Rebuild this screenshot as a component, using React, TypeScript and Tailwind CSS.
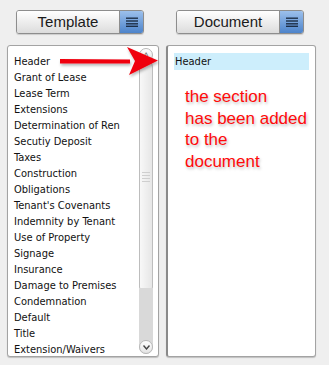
import React from 'react';

const sections = [
  'Header',
  'Grant of Lease',
  'Lease Term',
  'Extensions',
  'Determination of Ren',
  'Secutiy Deposit',
  'Taxes',
  'Construction',
  'Obligations',
  "Tenant's Covenants",
  'Indemnity by Tenant',
  'Use of Property',
  'Signage',
  'Insurance',
  'Damage to Premises',
  'Condemnation',
  'Default',
  'Title',
  'Extension/Waivers',
];

const listFont = { fontFamily: '"DejaVu Sans Condensed", "DejaVu Sans", sans-serif' };

const MenuIcon: React.FC = () => (
  <svg width="12" height="10" viewBox="0 0 12 10">
    <rect x="0" y="0.5" width="12" height="1.4" fill="#1d2f48" />
    <rect x="0" y="3.3" width="12" height="1.4" fill="#1d2f48" />
    <rect x="0" y="6.1" width="12" height="1.4" fill="#1d2f48" />
    <rect x="0" y="8.6" width="12" height="1.4" fill="#1d2f48" />
  </svg>
);

const SplitButton: React.FC<{ label: string }> = ({ label }) => (
  <div className="flex h-[24px] w-[128px] overflow-hidden rounded-[3px] border border-[#8d8d8d] shadow-[0_1px_1px_rgba(0,0,0,0.15)]">
    <div className="flex flex-1 items-center justify-center bg-gradient-to-b from-[#ffffff] to-[#dcdcdc] text-[15px] text-[#1a1a1a]">
      {label}
    </div>
    <div className="flex w-[24px] items-center justify-center border-l border-[#8d8d8d] bg-gradient-to-b from-[#9cc0ec] to-[#4d84cb]">
      <MenuIcon />
    </div>
  </div>
);

const Scrollbar: React.FC = () => (
  <div className="flex w-[16px] flex-col items-center py-[1px]">
    <div className="flex h-[14px] w-[14px] items-center justify-center rounded-full border border-[#b8b8b8] bg-gradient-to-b from-white to-[#e4e4e4] text-[8px] leading-none text-[#555]">
      ˄
    </div>
    <div className="mt-[-2px] flex h-[234px] w-[14px] flex-col items-center justify-center gap-[2px] rounded-[7px] border border-[#bdbdbd] bg-gradient-to-r from-[#f8f8f8] to-[#e6e6e6]">
      <div className="h-[1px] w-[8px] bg-[#cfcfcf]" />
      <div className="h-[1px] w-[8px] bg-[#cfcfcf]" />
      <div className="h-[1px] w-[8px] bg-[#cfcfcf]" />
      <div className="h-[1px] w-[8px] bg-[#cfcfcf]" />
    </div>
    <div className="mt-[-6px] flex-1 w-[14px] rounded-b-[7px] bg-[#d9d9d9]" />
    <div className="mt-[-14px] flex h-[14px] w-[14px] items-center justify-center rounded-full border border-[#b8b8b8] bg-gradient-to-b from-white to-[#e4e4e4]">
      <svg width="7" height="5" viewBox="0 0 7 5">
        <path d="M0.5 0.5 L3.5 4 L6.5 0.5" fill="none" stroke="#444" strokeWidth="1.4" />
      </svg>
    </div>
  </div>
);

const App: React.FC = () => {
  return (
    <div
      className="relative flex h-[365px] w-[329px] bg-[#efefef] pt-[10px]"
      style={{ fontFamily: '"Liberation Sans", Arial, sans-serif' }}
    >
      {/* template column */}
      <div className="ml-[7px] flex w-[152px] flex-col">
        <div className="ml-[9px]">
          <SplitButton label="Template" />
        </div>
        <div className="mt-[11px] flex h-[312px] rounded-[3px] border border-[#a3a3a3] bg-white shadow-[0_1px_1px_rgba(0,0,0,0.2)]">
          <div className="flex flex-1 flex-col pl-[6px] pt-[8px]" style={listFont}>
            {sections.map((s) => (
              <div key={s} className="h-[16px] whitespace-nowrap text-[11px] leading-[16px] text-[#111]">
                {s}
              </div>
            ))}
          </div>
          <div className="mr-[4px] flex py-[1px]">
            <Scrollbar />
          </div>
        </div>
      </div>

      {/* document column */}
      <div className="ml-[7px] flex w-[150px] flex-col">
        <div className="ml-[10px]">
          <SplitButton label="Document" />
        </div>
        <div className="mt-[11px] flex h-[312px] flex-col rounded-[3px] border border-[#a3a3a3] border-l-[2px] border-l-[#8a8a8a] bg-white px-[6px] pt-[7px] shadow-[0_1px_1px_rgba(0,0,0,0.2)]">
          <div className="h-[17px] bg-[#cdeefc] pl-[1px] text-[11px] leading-[17px] text-[#111]" style={listFont}>
            Header
          </div>
          <div
            className="mt-[16px] whitespace-nowrap pl-[11px] text-[17px] leading-[21.5px] text-[#ff0a0a] [text-shadow:1px_2px_3px_rgba(0,0,0,0.25)]"
            style={{ fontFamily: '"Liberation Sans Narrow", "Liberation Sans", sans-serif' }}
          >
            the section
            <br />
            has been added
            <br />
            to the
            <br />
            document
          </div>
        </div>
      </div>

      {/* red arrow */}
      <svg
        className="pointer-events-none absolute left-[56px] top-[44px]"
        width="108"
        height="36"
        viewBox="0 0 108 36"
      >
        <defs>
          <filter id="sh" x="-10%" y="-30%" width="130%" height="170%">
            <feDropShadow dx="1" dy="2" stdDeviation="1.5" floodColor="#000" floodOpacity="0.3" />
          </filter>
        </defs>
        <g filter="url(#sh)">
          <path d="M4 15 L74 15.5 L74 19.5 L4 19.5 Z" fill="#f00010" />
          <path d="M71 3 L102 16.5 L73 31 L79 17 Z" fill="#f00010" />
        </g>
      </svg>
    </div>
  );
};

export default App;
